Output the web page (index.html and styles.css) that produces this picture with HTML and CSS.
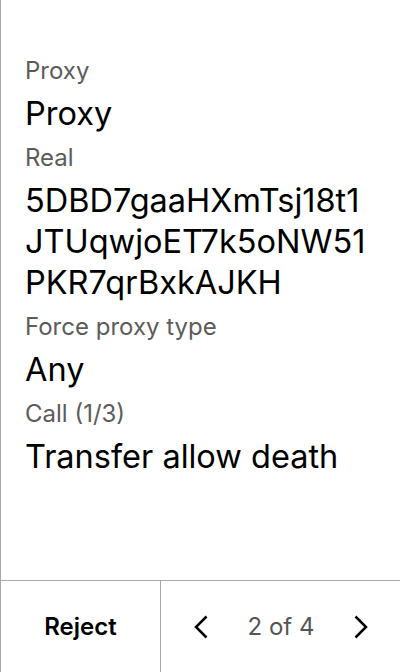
FILE: index.html
```html
<!DOCTYPE html>
<html>
<head>
<meta charset="utf-8">
<link rel="stylesheet" href="styles.css">
</head>
<body>
<div class="screen">
  <div class="content">
    <div class="label">Proxy</div>
    <div class="value">Proxy</div>
    <div class="label">Real</div>
    <div class="value">5DBD7gaaHXmTsj18t1<br>JTUqwjoET7k5oNW51<br>PKR7qrBxkAJKH</div>
    <div class="label">Force proxy type</div>
    <div class="value">Any</div>
    <div class="label">Call (1/3)</div>
    <div class="value">Transfer allow death</div>
  </div>
  <div class="footer">
    <div class="reject">Reject</div>
    <div class="pager">
      <svg class="chev" width="16" height="24" viewBox="0 0 16 24"><path d="M13.5 1.5 L3 12 L13.5 22.5" fill="none" stroke="#000" stroke-width="2.5"/></svg>
      <span class="count">2 of 4</span>
      <svg class="chev" width="16" height="24" viewBox="0 0 16 24"><path d="M2.5 1.5 L13 12 L2.5 22.5" fill="none" stroke="#000" stroke-width="2.5"/></svg>
    </div>
  </div>
</div>
</body>
</html>
```
FILE: styles.css
```css
html, body { margin: 0; padding: 0; background: #fff; }
body { font-family: Inter, "Noto Sans", sans-serif; }
.screen {
  width: 400px; height: 672px; box-sizing: border-box;
  border-left: 1px solid #a8a8a8;
  display: flex; flex-direction: column;
}
.content { flex: 1; padding: 57px 0 0 24px; }
.label { font-size: 24px; line-height: 28px; color: #5c5c5c; margin-bottom: 8px; }
.value { font-size: 32.5px; line-height: 41px; color: #000; margin-bottom: 10px; }
.footer {
  height: 92px; box-sizing: border-box; border-top: 1px solid #a8a8a8;
  display: flex;
}
.reject {
  width: 159px; border-right: 1px solid #a8a8a8;
  display: flex; align-items: center; justify-content: center;
  font-size: 24px; font-weight: 600; color: #000;
}
.pager { flex: 1; display: flex; align-items: center; justify-content: space-between; padding: 0 31px 0 32px; }
.count { font-size: 24px; color: #555; }
```
